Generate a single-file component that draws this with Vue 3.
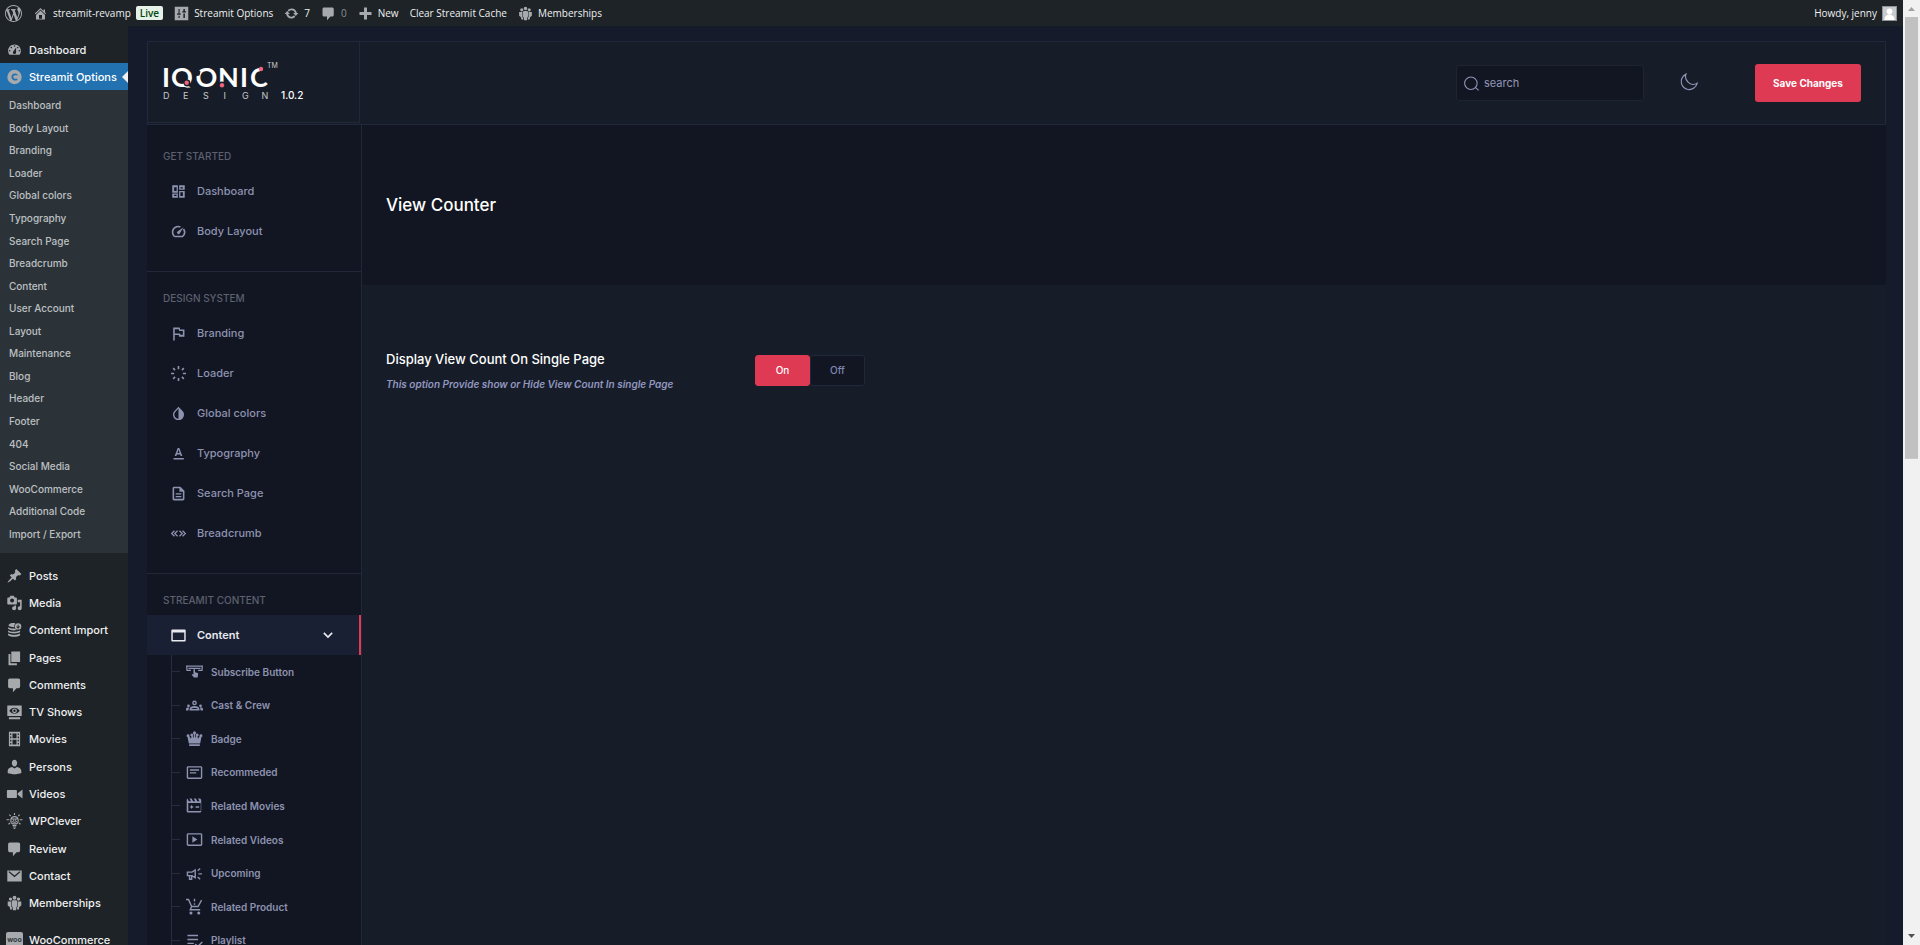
<template>
    <div class="page">
        <div class="screen">
            <nav class="adminbar" aria-label="Toolbar">
                <a href="#" class="bar-link" aria-label="About WordPress"><Icon name="wordpress" class="bar-logo" /></a>
                <a href="#" class="bar-link"><Icon name="home" class="bar-icon" />streamit-revamp<span class="live">Live</span></a>
                <a href="#" class="bar-link"><Icon name="sliders" class="bar-icon" />Streamit Options</a>
                <a href="#" class="bar-link"><Icon name="update" class="bar-icon" />7</a>
                <a href="#" class="bar-link muted"><Icon name="comment" class="bar-icon" />0</a>
                <a href="#" class="bar-link"><Icon name="plus" class="bar-icon" />New</a>
                <a href="#" class="bar-link">Clear Streamit Cache</a>
                <a href="#" class="bar-link"><Icon name="members" class="bar-icon" />Memberships</a>
                <a href="#" class="bar-link account">Howdy, jenny
                    <svg class="avatar" viewBox="0 0 15 15" aria-hidden="true">
                        <rect width="15" height="15" fill="#8f9499" />
                        <rect x="1" y="1" width="13" height="13" fill="#c8cbcd" />
                        <circle cx="7.5" cy="5.4" r="2.8" fill="#fff" />
                        <path d="M2.5 14c0-3 2-5.4 5-5.4s5 2.400 5 5.400z" fill="#fff" />
                    </svg>
                </a>
            </nav>

            <div class="body">
                <aside class="adminmenu">
                    <a href="#" class="menu-link"><Icon name="gauge" class="menu-icon" />Dashboard</a>
                    <a href="#" class="menu-link current"><Icon name="streamit" class="menu-icon" />Streamit Options</a>
                    <ul class="submenu">
                        <li v-for="item in submenu" :key="item"><a href="#">{{ item }}</a></li>
                    </ul>
                    <ul class="menu">
                        <li v-for="item in menu" :key="item.label">
                            <a href="#" class="menu-link"><Icon :name="item.icon" class="menu-icon" />{{ item.label }}</a>
                        </li>
                    </ul>
                    <a href="#" class="menu-link"><span class="woo" aria-hidden="true">woo</span>WooCommerce</a>
                </aside>

                <main class="content">
                    <header class="panel-header">
                        <div class="brand">
                            <svg class="logo" viewBox="0 0 116 40" role="img" aria-label="Iqonic Design">
                                <text class="logo-name" x="-1 8 32.500 55 77 87" y="27">IQONIC</text>
                                <g class="logo-cut">
                                    <circle cx="24" cy="23" r="3.400" />
                                    <path d="M17 27.600h17v6H17z" />
                                    <path d="M32 8l5.500 3.500-1 4-5 1z" />
                                    <circle cx="59" cy="25" r="3.600" />
                                    <path d="M97 4h12v10h-6l-6-2z" />
                                </g>
                                <g class="logo-dot">
                                    <circle cx="23.700" cy="22.700" r="2.200" />
                                    <circle cx="59" cy="25.200" r="2.200" />
                                    <circle cx="98" cy="9" r="2.200" />
                                </g>
                                <text class="logo-mark" x="104" y="8">TM</text>
                                <text class="logo-sub" x="0 20 40 60.500 79 98.500" y="39">DESIGN</text>
                            </svg>
                            <span class="version">1.0.2</span>
                        </div>
                        <div class="tools">
                            <label class="search">
                                <Icon name="search" class="search-icon" />
                                <input type="search" placeholder="search" aria-label="search" />
                            </label>
                            <button type="button" class="theme" aria-label="Toggle dark mode"><Icon name="moon" /></button>
                            <button type="button" class="save">Save Changes</button>
                        </div>
                    </header>

                    <div class="panel-body">
                        <nav class="sidebar" aria-label="Options">
                            <section v-for="group in groups" :key="group.title" class="group">
                                <h2>{{ group.title }}</h2>
                                <a v-for="item in group.items" :key="item.label" href="#" class="nav-link" :class="{ active: item.active }">
                                    <Icon :name="item.icon" class="nav-icon" />
                                    {{ item.label }}
                                    <Icon v-if="item.active" name="chevron" class="chevron" />
                                </a>
                            </section>
                            <ul class="tree">
                                <li v-for="item in children" :key="item.label">
                                    <a href="#"><Icon :name="item.icon" class="tree-icon" />{{ item.label }}</a>
                                </li>
                            </ul>
                        </nav>

                        <section class="options">
                            <div class="title-band">
                                <h1>View Counter</h1>
                            </div>
                            <fieldset class="option">
                                <div class="option-text">
                                    <h3 id="view-count">Display View Count On Single Page</h3>
                                    <p>This option Provide show or Hide View Count In single Page</p>
                                </div>
                                <div class="switch" role="radiogroup" aria-labelledby="view-count">
                                    <label v-for="choice in ['On', 'Off']" :key="choice">
                                        <input v-model="viewCount" type="radio" name="view-count" :value="choice" />
                                        <span>{{ choice }}</span>
                                    </label>
                                </div>
                            </fieldset>
                        </section>
                    </div>
                </main>
            </div>
        </div>

        <div class="scrollbar" aria-hidden="true">
            <svg viewBox="0 0 17 17"><path d="M5 11l3.500-4 3.500 4z" fill="#a3a3a3" /></svg>
            <div class="thumb"></div>
            <svg viewBox="0 0 17 17"><path d="M5 6h7l-3.500 4z" fill="#505050" /></svg>
        </div>
    </div>
</template>

<script setup>
import { h, ref } from 'vue';

const viewCount = ref('On');

// box: side of the square viewBox, fill / line: path data, width: line width
const icons = {
    wordpress: {
        box: 20,
        fill: 'M20 10c0-5.510-4.490-10-10-10C4.480 0 0 4.490 0 10c0 5.520 4.480 10 10 10 5.510 0 10-4.480 10-10zM7.780 15.370L4.370 6.220c.55-.02 1.170-.08 1.170-.08.5-.06.44-1.130-.06-1.110 0 0-1.450.11-2.370.11-.18 0-.37 0-.58-.01C4.120 2.690 6.870 1.110 10 1.110c2.330 0 4.450.87 6.050 2.340-.68-.11-1.650.39-1.650 1.580 0 .74.45 1.360.9 2.100.35.61.55 1.360.55 2.460 0 1.490-1.400 5-1.400 5l-3.030-8.370c.54-.02.82-.17.82-.17.5-.05.44-1.250-.06-1.220 0 0-1.440.12-2.380.12-.87 0-2.330-.12-2.330-.12-.5-.03-.56 1.200-.06 1.220l.92.08 1.260 3.410zM17.410 10c.24-.64.74-1.870.43-4.250.7 1.290 1.050 2.710 1.050 4.250 0 3.290-1.730 6.240-4.400 7.780.97-2.590 1.940-5.200 2.920-7.780zM6.100 18.090C3.120 16.650 1.110 13.530 1.110 10c0-1.300.23-2.480.72-3.590C3.250 10.300 4.670 14.200 6.100 18.090zm4.030-6.630l2.580 6.980c-.86.29-1.760.45-2.710.45-.79 0-1.570-.11-2.290-.33.81-2.380 1.620-4.740 2.420-7.100z'
    },
    home: { box: 20, fill: 'M16 8.500l1.530 1.530-1.060 1.060L10 4.600l-6.470 6.490-1.060-1.060L10 2.500l4 4v-2h2v4zm-6-2.460l6 5.990V18H4v-5.970zM12 17v-5H8v5h4z' },
    sliders: { box: 20, fill: 'M1 1h18v18H1zM6 4v6H4v1.500h5V10H7.500V4zM6 13v3h1.500v-3zM12.500 4v3H11v1.500h5V7h-1.500V4zM12.500 10v6h2v-6z' },
    update: {
        box: 20,
        fill: 'M10.200 3.280c3.530 0 6.430 2.610 6.920 6h2.080l-3.500 4-3.500-4h2.320c-.45-1.970-2.210-3.450-4.320-3.450-1.450 0-2.730.71-3.540 1.780L4.950 5.660C6.230 4.200 8.110 3.280 10.200 3.280zm-.4 13.440c-3.520 0-6.430-2.610-6.920-6H.8l3.500-4c1.170 1.330 2.330 2.670 3.500 4H5.480c.45 1.970 2.210 3.450 4.320 3.450 1.450 0 2.730-.71 3.540-1.780l1.710 1.950c-1.280 1.460-3.150 2.380-5.250 2.380z'
    },
    comment: { box: 20, fill: 'M4 2h11c1.100 0 2 .9 2 2v8c0 1.100-.9 2-2 2h-2.500l-4.500 5v-5H4c-1.100 0-2-.9-2-2V4c0-1.100.9-2 2-2z' },
    plus: { box: 20, fill: 'M8 2h4v6h6v4h-6v6H8v-6H2V8h6z' },
    members: {
        box: 20,
        fill: 'M10 1a2.400 2.400 0 1 1 0 4.800A2.400 2.400 0 0 1 10 1zM5 3a2 2 0 1 1 0 4.200A2 2 0 0 1 5 3zM15 3a2 2 0 1 1 0 4.200A2 2 0 0 1 15 3zM7.500 6.500h5l1 1.500v6l-1 1-.5 4H8l-.5-4-1-1V8zM1.500 8h4.300v6.500l1 1V18H4.500L4 15l-2.500-2zM18.500 8h-4.300v6.500l-1 1V18h2.300l.5-3 2.500-2z'
    },
    gauge: {
        box: 20,
        fill: 'M3.760 16h12.480c1.100-1.370 1.760-3.110 1.760-5 0-4.420-3.580-8-8-8s-8 3.580-8 8c0 1.890.66 3.630 1.760 5zM10 4c.55 0 1 .45 1 1s-.45 1-1 1-1-.45-1-1 .45-1 1-1zM6 6c.55 0 1 .45 1 1s-.45 1-1 1-1-.45-1-1 .45-1 1-1zm8 0c.55 0 1 .45 1 1s-.45 1-1 1-1-.45-1-1 .45-1 1-1zm-5.370 5.550L12 7v6c0 1.100-.9 2-2 2s-2-.9-2-2c0-.57.24-1.080.63-1.450zM4 10c.55 0 1 .45 1 1s-.45 1-1 1-1-.45-1-1 .45-1 1-1zm12 0c.55 0 1 .45 1 1s-.45 1-1 1-1-.45-1-1 .45-1 1-1z'
    },
    streamit: { box: 20, fill: 'M10 1a9 9 0 1 1 0 18 9 9 0 0 1 0-18zM11 5.500a4.500 4.500 0 1 0 3 7.500l-1.800-1.200A2.300 2.300 0 1 1 11 7.700h3.500A4.500 4.500 0 0 0 11 5.500z' },
    pin: {
        box: 20,
        fill: 'M10.440 3.020l1.820-1.820 6.360 6.350-1.830 1.820c-1.050-.68-2.480-.57-3.410.36l-.75.75c-.92.93-1.040 2.350-.35 3.410l-1.830 1.820-2.410-2.410-2.800 2.790c-.42.42-3.380 2.710-3.800 2.290s1.860-3.390 2.280-3.810l2.790-2.790L4.100 9.360l1.830-1.820c1.050.69 2.480.57 3.400-.36l.75-.75c.93-.92 1.050-2.350.36-3.410z'
    },
    media: {
        box: 20,
        fill: 'M13 11V4c0-.55-.45-1-1-1h-1.670L9 1H5L3.670 3H2c-.55 0-1 .45-1 1v7c0 .55.45 1 1 1h10c.55 0 1-.45 1-1zM7 4.500c1.380 0 2.500 1.120 2.500 2.500S8.380 9.500 7 9.500 4.500 8.380 4.500 7 5.620 4.500 7 4.500zM14 6h5v10.500c0 1.380-1.120 2.500-2.500 2.500S14 17.880 14 16.500s1.120-2.500 2.500-2.500c.17 0 .34.02.5.05V9h-3V6zm-4 8.050V13h2v3.500c0 1.380-1.120 2.500-2.500 2.500S7 17.880 7 16.500 8.120 14 9.500 14c.17 0 .34.02.5.05z'
    },
    database: {
        box: 20,
        fill: 'M3 3c2-1.500 5-2 8-1.500a5 5 0 0 0-1 5C7 6.600 4 6 2.500 4.800zM2 6.500c2 1.400 5 1.800 8.500 1.600A5 5 0 0 0 13 10c-4 1-8 .4-11-1.500zM2 10.500c3 2 10 2.200 15 0v2c-4 2.400-11 2.400-15 0zM2 14.500c4 2.200 11 2.200 15 0v2c-4 2.700-11 2.700-15 0zM14.500 1.500a4 4 0 1 1 0 8 4 4 0 0 1 0-8zM13.900 3.500v2.700l-1-1-.8.8 2.400 2.300 2.400-2.300-.8-.8-1 1V3.500z'
    },
    pages: { box: 20, fill: 'M6 15V2h11v13zM5 16.500h8V19H2.500V5H5z' },
    tv: { box: 20, fill: 'M1 2h18v13H1zM3.500 8.500c3 5 10 5 13 0-3-5-10-5-13 0zM10 5.500a3 3 0 1 1 0 6 3 3 0 0 1 0-6zM10 7a1.500 1.500 0 1 0 0 3 1.500 1.500 0 0 0 0-3zM3 16.500h14V19H3z' },
    film: { box: 20, fill: 'M3 1h14v18H3zM4.500 3v2H6V3zM4.500 7v2H6V7zM4.500 11v2H6v-2zM4.500 15v2H6v-2zM14 3v2h1.500V3zM14 7v2h1.500V7zM14 11v2h1.500v-2zM14 15v2h1.500v-2zM7.500 3v6h5V3zM7.500 11v6h5v-6z' },
    person: {
        box: 20,
        fill: 'M10 9.500C7.500 9.500 6.700 6.500 6.700 5c0-2 1.200-4 3.300-4s3.300 2 3.300 4c0 1.500-.8 4.500-3.300 4.500zM7 10l3 1.800 3-1.800c3 .3 5.500 2.500 5.500 5v2.500S15 19 10 19s-8.500-1.500-8.500-1.500V15c0-2.500 2.500-4.700 5.500-5z'
    },
    video: { box: 20, fill: 'M13 14V6c0-.6-.4-1-1-1H1.500c-.6 0-1 .4-1 1v8c0 .6.4 1 1 1H12c.6 0 1-.4 1-1zm1-3l6 4.500v-11L14 9z' },
    bulb: {
        box: 20,
        width: 1.4,
        line: 'M7 13.500C4 11 5 4.500 10 4.500s6 6.500 3 9M10 0v2.500M3.500 2l1.800 1.800M16.500 2l-1.800 1.800M0 8.500h3.500M16.500 8.500H20M2.500 14l2-1.500M17.500 14l-2-1.500M6.500 7.500h7M7 10.500c1.500 1.500 4.500 1.500 6 0M7 13.500h6M7.500 15.500h5M8 17.500h4M9 19.300h2M8 9h1.500M10.500 9H12'
    },
    mail: { box: 20, fill: 'M1 3h18v14H1zM2.500 5l7.500 6.500L17.500 5l-1-1L10 9.500 3.500 4z' },
    search: { box: 24, width: 1.7, line: 'M11 1.500a10 10 0 1 1 0 20 10 10 0 0 1 0-20zM18.500 18.500l5 4.500' },
    moon: { box: 24, width: 1.5, line: 'M8 1.500C2.500 4 .5 10 2.500 15.500c2.500 6.500 10.500 8.500 16 4.500 2.200-1.600 3.800-3.800 4.500-6.500-3.500 2.500-8.500 2.500-12-1S6.500 5 8 1.500z' },
    chevron: { box: 24, width: 4, line: 'M2 7l10 10L22 7' },
    grid: { box: 24, fill: 'M19 5v2h-4V5h4M9 5v6H5V5h4m10 8v6h-4v-6h4M9 17v2H5v-2h4M22 2h-9v7h9V2zM11 2H2v12h9V2zm11 9h-9v11h9V11zm-11 4H2v7h9v-7z' },
    speed: { box: 24, width: 2.6, line: 'M5.500 20C.5 15 2 6 9 4.300c2-.5 4-.4 6 .4M20 8c2.500 4 2 9-1.500 12h-13', fill: 'M20 5l-9 6.500a2.400 2.400 0 1 0 3.200 3.200z' },
    flag: { box: 24, fill: 'M12.500 5l.5 3h6v6h-4l-.5-2H6V5h6.500M14 2.500H3.500V23H6v-8.500h6.500L13 17h8.500V5.500h-7z' },
    loader: { box: 24, width: 2.6, line: 'M12 0v5M12 19v5M0 12h5M19 12h5M3.500 3.500l3 3M17.500 17.500l3 3M20.500 3.500l-3 3M6.500 17.500l-3 3' },
    drop: { box: 24, fill: 'M12 1l6.500 6.800c5 5.200 1.500 14.700-6.500 14.700S.5 13 5.500 7.800zM12 4L7.200 9.200C3.500 13 5.500 20.300 12 20.300z' },
    type: { box: 24, fill: 'M4 19v2.500h16.500V19zM9.500 13.500h5l1 2.500h2.600L13.300 3h-2.600L5.900 16h2.600zM12 5.800l1.800 5.400h-3.600z' },
    file: { box: 24, fill: 'M7.500 16h9v2h-9zm0-4.500h9v2h-9zM15 1H5C3.500 1 2.500 2 2.500 3.500v17C2.500 22 3.500 23 5 23h14c1.500 0 2.500-1 2.500-2.500V7.500zm4 19.500H5v-17h8.500V9H19z' },
    arrows: { box: 24, line: 'M5.500 7.500L1 12l4.500 4.500M10.500 7.500L6 12l4.500 4.500M13.500 7.500L18 12l-4.500 4.500M18.500 7.500L23 12l-4.500 4.500' },
    window: { box: 24, fill: 'M2 2.500h20c1 0 1.500.5 1.500 1.500v16c0 1-.5 1.500-1.500 1.500H2C1 21.500.5 21 .5 20V4C.5 3 1 2.500 2 2.500zM2.800 7v12.200h18.400V7z' },
    subscribe: {
        box: 24,
        width: 1.8,
        line: 'M7 10.500H1.500L1 4.500h22l-.5 6H17M3.500 7.500h17',
        fill: 'M10.500 9.500c.3-1.300 2-1.300 2.200 0v3.500l3 .7c1.200.4 1.600 1.200 1.400 2.300l-.7 4.500h-5.200L8 16.500c.7-1 1.600-.8 2.500-.2z'
    },
    crew: {
        box: 24,
        fill: 'M12 5a3.300 3.300 0 1 1 0 6.600A3.300 3.300 0 0 1 12 5zM12 7a1.300 1.300 0 1 0 0 2.600A1.300 1.300 0 0 0 12 7zM5 19v-2c0-5.500 14-5.500 14 0v2zM7.500 17h9c-1-2-8-2-9 0zM3.500 10.500a2 2 0 1 1 0 4 2 2 0 0 1 0-4zM20.500 10.500a2 2 0 1 1 0 4 2 2 0 0 1 0-4zM0 19v-2c0-1.500 2-2.200 4.500-2-.8 1-1 2-1 4zM24 19v-2c0-1.500-2-2.200-4.500-2 .8 1 1 2 1 4z'
    },
    crown: {
        box: 24,
        fill: 'M4.500 20h15v2.500h-15zM4 19L2.200 10a2.100 2.100 0 1 1 2.600-1.200L7 12.500 7.800 9a2 2 0 1 1 1.700-.5l1.300 3L11 6a2.200 2.200 0 1 1 2 0l.2 5.500 1.300-3a2 2 0 1 1 1.700.5l.8 3.500 2.200-3.700a2.100 2.100 0 1 1 2.600 1.200L20 19z'
    },
    article: { box: 24, fill: 'M3 3h18c1 0 2 .9 2 2v14c0 1.100-1 2-2 2H3c-1 0-2-.9-2-2V5c0-1.100 1-2 2-2zM3 5v14h18V5zM5.500 7.500h13v2h-13zM5.500 11.500h9v2h-9z' },
    clapper: { box: 24, fill: 'M2 2l2 4h3L5 2h3l2 4h3l-2-4h3l2 4h3l-2-4h3l1.500 2v16c0 1-.9 2-2 2H3c-1.100 0-2-.9-2-2V4zM3.200 8.500v11.300h17.600V8.500zM8 11l1 2 2 1-2 1-1 2-1-2-2-1 2-1zM13.500 13h5v2h-5z' },
    play: { box: 24, fill: 'M3 3h18c1 0 2 .9 2 2v14c0 1.100-1 2-2 2H3c-1 0-2-.9-2-2V5c0-1.100 1-2 2-2zM3 5v14h18V5zM9 7.500l7 4.500-7 4.500z' },
    horn: { box: 24, line: 'M13 7v11l-4.500-3H2v-5h6.500zM5 15v5h3v-5M17.500 12.500h5M16.500 8l3.500-3M16.500 17l3.500 3' },
    cart: { box: 24, line: 'M0 2h3.500L8 12h9l5-9M8 12l-2 4.500h14M12 1v4M12 7.500v2', fill: 'M7 19a2.200 2.200 0 1 1 0 4.400A2.200 2.200 0 0 1 7 19zM18 19a2.200 2.200 0 1 1 0 4.400 2.200 2.200 0 0 1 0-4.400z' },
    playlist: { box: 24, line: 'M2 5h15M2 10.500h15M2 16h9M13 17l3.500 3.500L23 14' }
};

// draws one entry of the table above
const Icon = (props) => {
    const icon = icons[props.name];
    return h('svg', { viewBox: `0 0 ${icon.box} ${icon.box}`, 'aria-hidden': 'true' }, [
        icon.fill && h('path', { d: icon.fill, fill: 'currentColor', 'fill-rule': 'evenodd' }),
        icon.line && h('path', { d: icon.line, fill: 'none', stroke: 'currentColor', 'stroke-width': icon.width || 2 })
    ]);
};
Icon.props = ['name'];

const submenu = ['Dashboard', 'Body Layout', 'Branding', 'Loader', 'Global colors', 'Typography', 'Search Page', 'Breadcrumb', 'Content', 'User Account', 'Layout', 'Maintenance', 'Blog', 'Header', 'Footer', '404', 'Social Media', 'WooCommerce', 'Additional Code', 'Import / Export'];

const menu = [
    { label: 'Posts', icon: 'pin' },
    { label: 'Media', icon: 'media' },
    { label: 'Content Import', icon: 'database' },
    { label: 'Pages', icon: 'pages' },
    { label: 'Comments', icon: 'comment' },
    { label: 'TV Shows', icon: 'tv' },
    { label: 'Movies', icon: 'film' },
    { label: 'Persons', icon: 'person' },
    { label: 'Videos', icon: 'video' },
    { label: 'WPClever', icon: 'bulb' },
    { label: 'Review', icon: 'comment' },
    { label: 'Contact', icon: 'mail' },
    { label: 'Memberships', icon: 'members' }
];

const groups = [
    {
        title: 'Get Started',
        items: [
            { label: 'Dashboard', icon: 'grid' },
            { label: 'Body Layout', icon: 'speed' }
        ]
    },
    {
        title: 'Design System',
        items: [
            { label: 'Branding', icon: 'flag' },
            { label: 'Loader', icon: 'loader' },
            { label: 'Global colors', icon: 'drop' },
            { label: 'Typography', icon: 'type' },
            { label: 'Search Page', icon: 'file' },
            { label: 'Breadcrumb', icon: 'arrows' }
        ]
    },
    {
        title: 'Streamit Content',
        items: [{ label: 'Content', icon: 'window', active: true }]
    }
];

const children = [
    { label: 'Subscribe Button', icon: 'subscribe' },
    { label: 'Cast & Crew', icon: 'crew' },
    { label: 'Badge', icon: 'crown' },
    { label: 'Recommeded', icon: 'article' },
    { label: 'Related Movies', icon: 'clapper' },
    { label: 'Related Videos', icon: 'play' },
    { label: 'Upcoming', icon: 'horn' },
    { label: 'Related Product', icon: 'cart' },
    { label: 'Playlist', icon: 'playlist' }
];
</script>

<style>
body {
    margin: 0;
    background: #161b2b;
}
</style>

<style scoped>
.page {
    display: flex;
    height: 100vh;
    overflow: hidden;
    background: #161b2b;
    font-family: Inter, 'Liberation Sans', sans-serif;
    font-size: 11px;
    color: #fff;
}

.page * {
    box-sizing: border-box;
}

.page svg {
    display: block;
    flex: none;
}

a {
    color: inherit;
    text-decoration: none;
}

ul {
    list-style: none;
    margin: 0;
    padding: 0;
}

h1,
h2,
h3,
p {
    margin: 0;
}

.screen {
    flex: 1;
    min-width: 0;
    display: flex;
    flex-direction: column;
}

/* toolbar */
.adminbar {
    flex: none;
    height: 26px;
    display: flex;
    align-items: center;
    gap: 11px;
    padding: 0 6px 0 5px;
    background: #1d2327;
    color: #f0f0f1;
    font-family: 'Open Sans', 'Noto Sans', sans-serif;
    font-size: 10px;
}

.bar-link {
    display: flex;
    align-items: center;
    gap: 5px;
    white-space: nowrap;
}

.bar-logo {
    width: 17px;
    height: 17px;
    color: #a7aaad;
}

.bar-icon {
    width: 15px;
    height: 15px;
    color: #a7aaad;
}

.muted {
    color: #8c8f94;
}

.live {
    padding: 0 4px;
    border-radius: 2px;
    background: #e6f2e8;
    color: #00450c;
    font-weight: 600;
    line-height: 14px;
}

.account {
    margin-left: auto;
}

.avatar {
    width: 15px;
    height: 15px;
}

.body {
    flex: 1;
    min-height: 0;
    display: flex;
}

/* admin menu */
.adminmenu {
    flex: none;
    width: 128px;
    padding-top: 10px;
    overflow: hidden;
    background: #1d2327;
    font-weight: 500;
    line-height: 14px;
}

.menu-link {
    position: relative;
    display: flex;
    align-items: center;
    gap: 6px;
    height: 27px;
    padding-left: 6px;
    color: #f0f0f1;
    white-space: nowrap;
}

.menu-icon {
    width: 17px;
    height: 16px;
    color: #a7aaad;
}

.current {
    background: #2271b1;
    color: #fff;
}

.current::after {
    content: '';
    position: absolute;
    right: 0;
    border: 6px solid transparent;
    border-right-color: #f0f0f1;
    border-left-width: 0;
}

.submenu {
    display: grid;
    grid-auto-rows: 1fr;
    min-height: 463px;
    padding: 4px 0 8px 9px;
    background: #2c3338;
    color: #bcc0c3;
    font-size: 10px;
}

.submenu li {
    display: flex;
    align-items: center;
}

.menu {
    display: grid;
    grid-auto-rows: 1fr;
    align-items: center;
    min-height: 355px;
    margin: 9px 0;
}

.woo {
    width: 17px;
    border-radius: 2px;
    background: #a7aaad;
    color: #33383d;
    font-size: 7px;
    font-weight: 700;
    line-height: 16px;
    text-align: center;
}

/* options panel */
.content {
    flex: 1;
    min-width: 0;
    display: flex;
    flex-direction: column;
    padding: 15px 17px 0 19px;
}

.panel-header {
    flex: none;
    height: 84px;
    display: flex;
    justify-content: space-between;
    align-items: flex-start;
    background: #171d28;
    border: 1px solid #22283a;
}

.brand {
    width: 212px;
    height: 81px;
    display: flex;
    align-items: flex-end;
    gap: 2px;
    padding: 0 0 22px 15px;
    border: solid #22283a;
    border-width: 0 1px 1px 0;
}

.logo {
    width: 116px;
    height: 40px;
}

.logo-name {
    fill: #fff;
    font-family: Lato, sans-serif;
    font-size: 27px;
    font-weight: 700;
}

.logo-cut {
    fill: #171d28;
}

.logo-dot {
    fill: #f0627e;
}

.logo-mark {
    fill: #c6c8cc;
    font-size: 7px;
}

.logo-sub {
    fill: #c6c8cc;
    font-size: 9px;
}

.version {
    font-size: 10px;
    font-weight: 500;
    line-height: 10px;
}

.tools {
    display: flex;
    align-items: center;
    align-self: center;
    padding-right: 24px;
}

.search {
    width: 188px;
    height: 36px;
    display: flex;
    align-items: center;
    gap: 5px;
    padding: 0 7px;
    border: 1px solid #1f2433;
    border-radius: 3px;
    background: #121622;
    color: #9297b8;
}

.search-icon {
    width: 15px;
    height: 15px;
}

.search input {
    flex: 1;
    min-width: 0;
    padding: 0;
    border: 0;
    outline: 0;
    background: none;
    color: inherit;
    font: inherit;
}

.search input::placeholder {
    color: inherit;
    opacity: 1;
}

.theme {
    width: 18px;
    height: 20px;
    margin: 0 57px 0 36px;
    padding: 0 0 2px;
    border: 0;
    background: none;
    color: #9297b8;
}

.save {
    width: 106px;
    height: 38px;
    padding: 0;
    border: 0;
    border-radius: 3px;
    background: #de3a53;
    color: #fff;
    font: inherit;
    font-size: 10px;
    font-weight: 700;
}

.panel-body {
    flex: 1;
    min-height: 0;
    display: flex;
}

.sidebar {
    flex: none;
    width: 215px;
    padding-top: 5px;
    overflow: hidden;
    border-right: 1px solid #22283a;
    background: #121622;
    color: #8d92b0;
    font-weight: 500;
}

.group {
    padding: 20px 0;
    border-bottom: 1px solid #22283a;
}

.group:last-of-type {
    padding-bottom: 0;
    border-bottom: 0;
}

.group h2 {
    padding: 0 0 9px 16px;
    color: #5c6070;
    font-size: 10px;
    font-weight: 500;
    line-height: 12px;
    text-transform: uppercase;
}

.nav-link {
    display: flex;
    align-items: center;
    gap: 11px;
    height: 40px;
    padding-left: 24px;
}

.nav-icon {
    width: 15px;
    height: 15px;
}

.active {
    padding-right: 26px;
    border-right: 2px solid #de3a53;
    background: #1a2034;
    color: #e9eaf0;
    font-weight: 600;
}

.chevron {
    width: 10px;
    height: 10px;
    margin-left: auto;
}

.tree {
    display: grid;
    grid-auto-rows: 1fr;
    min-height: 302px;
    margin-left: 24px;
    border-left: 1px solid #272c3f;
    font-size: 10px;
    font-weight: 600;
}

.tree li {
    display: flex;
    align-items: center;
}

.tree li::before {
    content: '';
    width: 8px;
    height: 1px;
    margin-right: 6px;
    background: #272c3f;
}

.tree a {
    display: flex;
    align-items: center;
    gap: 8px;
}

.tree-icon {
    width: 17px;
    height: 17px;
}

.options {
    flex: 1;
    min-width: 0;
    background: #171d28;
}

.title-band {
    height: 160px;
    display: flex;
    align-items: center;
    padding-left: 24px;
    background: #121622;
}

.title-band h1 {
    font-size: 17px;
    font-weight: 500;
}

.option {
    display: flex;
    align-items: flex-start;
    margin: 0;
    padding: 65px 24px;
    border: 0;
}

.option-text {
    width: 369px;
}

.option h3 {
    font-size: 13px;
    font-weight: 500;
    line-height: 18px;
}

.option p {
    margin-top: 9px;
    color: #9297c0;
    font-size: 10px;
    font-style: italic;
    font-weight: 600;
    line-height: 14px;
}

.switch {
    display: flex;
    margin-top: 5px;
}

.switch label {
    position: relative;
    cursor: pointer;
}

.switch input {
    position: absolute;
    opacity: 0;
}

.switch span {
    width: 55px;
    display: block;
    border: 1px solid #22283a;
    border-radius: 3px;
    background: #121622;
    color: #7f87ad;
    font-size: 10px;
    font-weight: 500;
    line-height: 29px;
    text-align: center;
}

.switch input:checked + span {
    border-color: #de3a53;
    background: #de3a53;
    color: #fff;
}

/* window scrollbar */
.scrollbar {
    flex: none;
    width: 17px;
    display: flex;
    flex-direction: column;
    background: #f1f1f1;
}

.scrollbar svg {
    width: 17px;
    height: 17px;
}

.thumb {
    flex: 1;
    margin: 0 2px;
    background: linear-gradient(#c1c1c1, #c1c1c1) no-repeat 0 0 / 100% 48.5%;
}
</style>
